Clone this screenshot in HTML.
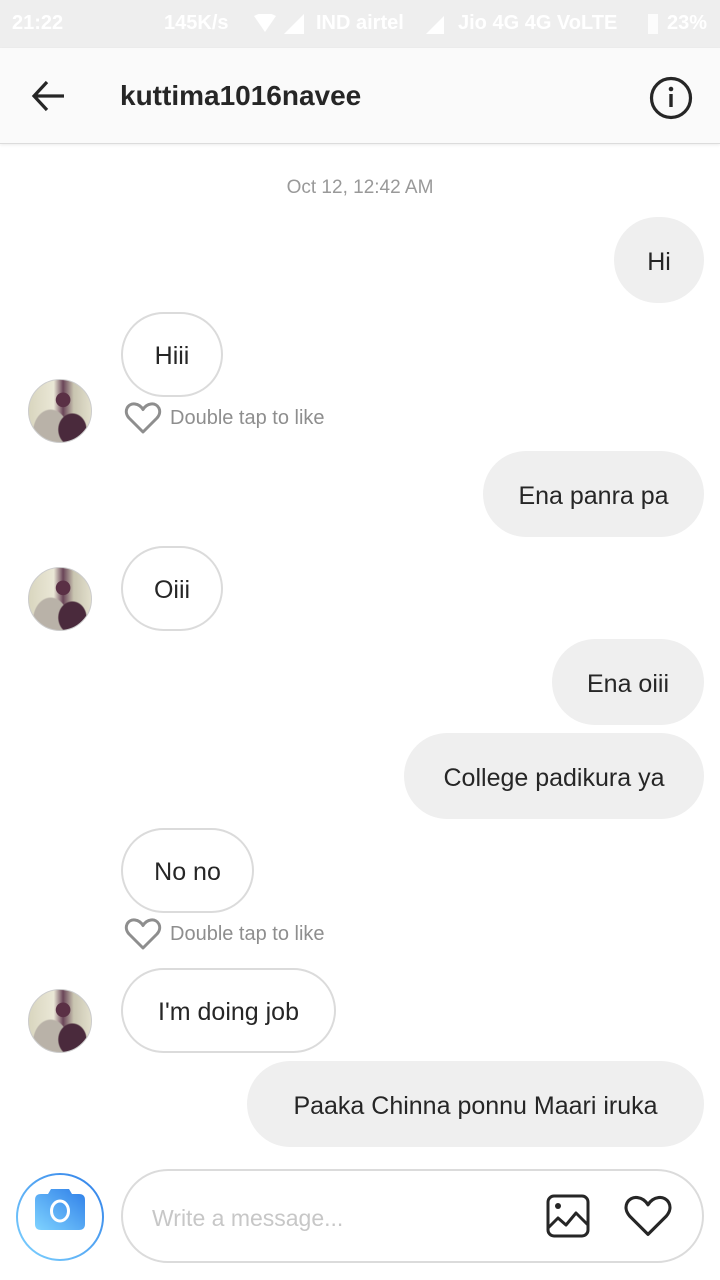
<!DOCTYPE html>
<html><head><meta charset="utf-8"><style>
*{margin:0;padding:0;box-sizing:border-box}
body{width:720px;height:1280px;background:#fff;position:relative;overflow:hidden;font-family:"Liberation Sans",sans-serif;color:#262626}
.abs{position:absolute}
.sb{left:0;top:0;width:720px;height:48px;background:#eeeeee;color:#fff;font-weight:bold;font-size:20px}
.hd{left:0;top:48px;width:720px;height:96px;background:#fafafa;border-bottom:1px solid #dcdcdc;box-shadow:0 1px 3px rgba(0,0,0,.08)}
.b{position:absolute;height:86px;border-radius:43px;display:flex;align-items:center;justify-content:center;font-size:25px;color:#262626;white-space:nowrap;padding-top:4px}
.s{background:#efefef}
.r{background:#fff;border:2px solid #dbdbdb;height:85px}
.av{position:absolute;left:28px;width:64px;height:64px;border-radius:50%;overflow:hidden;border:1px solid #ccc;background:radial-gradient(circle at 55% 32%,#5a3045 0 13%,transparent 14%),radial-gradient(ellipse at 70% 80%,#4a2a3c 0 22%,transparent 24%),radial-gradient(ellipse at 35% 85%,#b9b2a8 0 30%,transparent 32%),linear-gradient(90deg,#d9d6bf,#eae7d6 40%,#6a4558 55%,#c8c4b0 72%,#e2dfcc)}
.lk{position:absolute;left:124px;font-size:20px;color:#8e8e8e;display:flex;align-items:center}
.lk svg{margin-right:8px}
</style></head><body>
<div class="abs sb">
<span class="abs" style="left:12px;top:12px">21:22</span>
<span class="abs" style="left:164px;top:12px">145K/s</span>
<svg class="abs" style="left:254px;top:14px" width="22" height="20"><path d="M0 2 Q11 -4 22 2 L11 18Z" fill="#fff"/></svg>
<svg class="abs" style="left:284px;top:14px" width="20" height="20"><path d="M0 20 L20 0 L20 20Z" fill="#fff"/></svg>
<span class="abs" style="left:316px;top:12px">IND airtel</span>
<svg class="abs" style="left:426px;top:16px" width="18" height="18"><path d="M0 18 L18 0 L18 18Z" fill="#fff"/></svg>
<span class="abs" style="left:458px;top:12px">Jio 4G 4G VoLTE</span>
<div class="abs" style="left:648px;top:14px;width:10px;height:20px;background:#fff;opacity:.8"></div>
<span class="abs" style="left:667px;top:12px">23%</span>
</div>
<div class="abs hd">
<svg class="abs" style="left:30px;top:32px" width="36" height="32"><path d="M4 16 H34 M17 2 L4 16 L17 30" stroke="#262626" stroke-width="3.2" fill="none"/></svg>
<span class="abs" style="left:120px;top:32px;font-size:28px;font-weight:bold;color:#262626">kuttima1016navee</span>
<svg class="abs" style="left:648px;top:27px" width="46" height="46"><circle cx="23" cy="23" r="19.5" stroke="#262626" stroke-width="3.2" fill="none"/><circle cx="23" cy="14" r="2.3" fill="#262626"/><rect x="21.3" y="19" width="3.4" height="13" fill="#262626"/></svg>
</div>
<div class="abs" style="left:0;width:720px;top:177px;text-align:center;font-size:19px;color:#999">Oct 12, 12:42 AM</div>

<div class="b s" style="left:614px;top:217px;width:90px">Hi</div>
<div class="b r" style="left:121px;top:312px;width:102px">Hiii</div>
<div class="av" style="top:379px"></div>
<div class="lk" style="top:401px"><svg width="38" height="34" viewBox="0 0 38 34"><path d="M19 31 L5 17 C-1 10 4 2 11 3 C15 3.5 17.5 6 19 8.5 C20.5 6 23 3.5 27 3 C34 2 39 10 33 17Z" stroke="#8e8e8e" stroke-width="3" fill="none" stroke-linejoin="round"/></svg>Double tap to like</div>

<div class="b s" style="left:483px;top:451px;width:221px">Ena panra pa</div>
<div class="b r" style="left:121px;top:546px;width:102px">Oiii</div>
<div class="av" style="top:567px"></div>
<div class="b s" style="left:552px;top:639px;width:152px">Ena oiii</div>
<div class="b s" style="left:404px;top:733px;width:300px">College padikura ya</div>
<div class="b r" style="left:121px;top:828px;width:133px">No no</div>
<div class="lk" style="top:917px"><svg width="38" height="34" viewBox="0 0 38 34"><path d="M19 31 L5 17 C-1 10 4 2 11 3 C15 3.5 17.5 6 19 8.5 C20.5 6 23 3.5 27 3 C34 2 39 10 33 17Z" stroke="#8e8e8e" stroke-width="3" fill="none" stroke-linejoin="round"/></svg>Double tap to like</div>
<div class="b r" style="left:121px;top:968px;width:215px">I'm doing job</div>
<div class="av" style="top:989px"></div>
<div class="b s" style="left:247px;top:1061px;width:457px">Paaka Chinna ponnu Maari iruka</div>

<svg class="abs" style="left:15px;top:1172px" width="90" height="90"><defs><linearGradient id="g" x1="0" y1="1" x2="1" y2="0"><stop offset="0" stop-color="#7fd3ff"/><stop offset="1" stop-color="#2f7fe8"/></linearGradient></defs><circle cx="45" cy="45" r="43" stroke="url(#g)" stroke-width="2" fill="#fff"/><path d="M20 28 Q20 22 26 22 H33 L36 17 H54 L57 22 H64 Q70 22 70 28 V52 Q70 58 64 58 H26 Q20 58 20 52Z" fill="url(#g)"/><ellipse cx="45" cy="39" rx="8.5" ry="10" stroke="#fff" stroke-width="3" fill="none"/></svg>
<div class="abs" style="left:121px;top:1169px;width:583px;height:94px;border:2px solid #dbdbdb;border-radius:47px;background:#fff"></div>
<span class="abs" style="left:152px;top:1205px;font-size:23px;color:#c7c7c7">Write a message...</span>
<svg class="abs" style="left:545px;top:1193px" width="46" height="46"><rect x="3" y="3" width="40" height="40" rx="6" stroke="#262626" stroke-width="3" fill="none"/><circle cx="13" cy="13" r="3" fill="#262626"/><path d="M3 35 L13 25 L21 32 L31 20 L43 32" stroke="#262626" stroke-width="3" fill="none" stroke-linejoin="round"/></svg>
<svg class="abs" style="left:623px;top:1193px" width="50" height="46" viewBox="0 0 38 34"><path d="M19 31 L5 17 C-1 10 4 2 11 3 C15 3.5 17.5 6 19 8.5 C20.5 6 23 3.5 27 3 C34 2 39 10 33 17Z" stroke="#262626" stroke-width="2.4" fill="none" stroke-linejoin="round"/></svg>
</body></html>
